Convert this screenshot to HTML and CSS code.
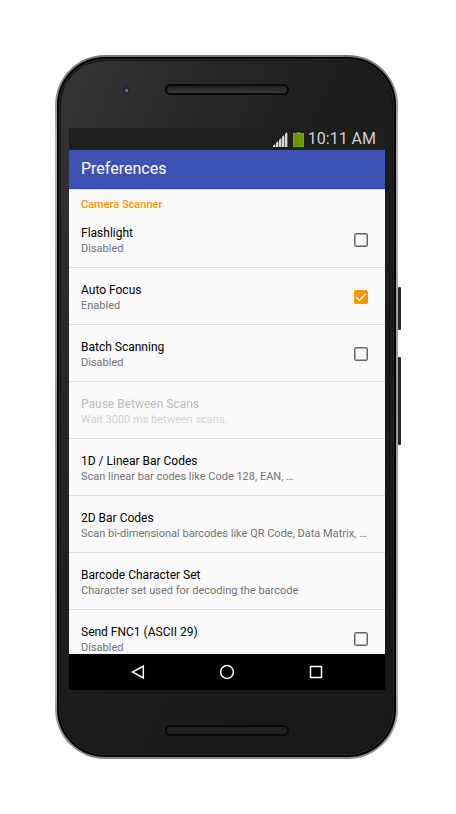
FILE: index.html
```html
<!DOCTYPE html>
<html lang="en">
<head>
<meta charset="utf-8">
<meta name="viewport" content="width=device-width, initial-scale=1">
<title>Preferences</title>
<link rel="stylesheet" href="styles.css">
</head>
<body>
<div class="phone">
  <span class="side-button power"></span>
  <span class="side-button volume"></span>
  <div class="face">
    <div class="forehead">
      <span class="camera"></span>
      <span class="speaker"></span>
    </div>
    <main class="screen">
      <div class="status">
        <svg class="signal" viewBox="0 0 15 15" aria-hidden="true">
          <path d="M0 15L15 1v14z" fill="#6a6a6a"/>
          <path d="M0 15v-1l2-2v3zM3 15v-4l2-2v6zM6 15V8l2-2v9zM9 15V5l2-2v12zM12 15V2l2-2v15z" fill="#d8d8d8"/>
        </svg>
        <svg class="battery" viewBox="0 0 11 15" aria-hidden="true">
          <path d="M4 0h3v1h4v14H0V1h4z" fill="#669900"/>
          <path d="M.5 1.500h10v13H.5z" fill="none" stroke="#7fb010" stroke-dasharray="2 1"/>
        </svg>
        <time>10:11 AM</time>
      </div>
      <header class="app-bar"><h1>Preferences</h1></header>
      <section class="list">
        <h2>Camera Scanner</h2>
        <label class="row"><span class="text"><span class="title">Flashlight</span><span class="summary">Disabled</span></span><span class="box"><input type="checkbox"></span></label>
        <label class="row"><span class="text"><span class="title">Auto Focus</span><span class="summary">Enabled</span></span><span class="box"><input type="checkbox" checked><svg viewBox="0 0 14 14" aria-hidden="true"><path d="M2.300 7.200l3.200 3.200 6.300-6.600"/></svg></span></label>
        <label class="row"><span class="text"><span class="title">Batch Scanning</span><span class="summary">Disabled</span></span><span class="box"><input type="checkbox"></span></label>
        <button class="row" type="button" disabled><span class="text"><span class="title">Pause Between Scans</span><span class="summary">Wait 3000 ms between scans.</span></span></button>
        <button class="row" type="button"><span class="text"><span class="title">1D / Linear Bar Codes</span><span class="summary">Scan linear bar codes like Code 128, EAN, …</span></span></button>
        <button class="row" type="button"><span class="text"><span class="title">2D Bar Codes</span><span class="summary">Scan bi-dimensional barcodes like QR Code, Data Matrix, …</span></span></button>
        <button class="row" type="button"><span class="text"><span class="title">Barcode Character Set</span><span class="summary">Character set used for decoding the barcode</span></span></button>
        <label class="row"><span class="text"><span class="title">Send FNC1 (ASCII 29)</span><span class="summary">Disabled</span></span><span class="box"><input type="checkbox"></span></label>
      </section>
      <nav class="nav">
        <button type="button" aria-label="Back"><svg viewBox="0 0 16 16"><path d="M13.300 2v12L2.500 8z"/></svg></button>
        <button type="button" aria-label="Home"><svg viewBox="0 0 16 16"><circle cx="8" cy="8" r="6.400"/></svg></button>
        <button type="button" aria-label="Recent apps"><svg viewBox="0 0 16 16"><rect x="2.500" y="2.500" width="11" height="11" rx=".5"/></svg></button>
      </nav>
    </main>
    <div class="chin"><span class="speaker low"></span></div>
  </div>
</div>
</body>
</html>
```
FILE: styles.css
```css
* { box-sizing: border-box; }

body {
  margin: 0;
  padding: 55px 58px 55px 55px;
  background: #fff;
  font-family: Roboto, "Liberation Sans", sans-serif;
}

h1, h2 { margin: 0; font-weight: 500; }

button {
  margin: 0;
  padding: 0;
  border: 0;
  background: none;
  font: inherit;
  text-align: left;
}

.phone {
  position: relative;
  height: calc(100vh - 110px);
  min-height: 400px;
  padding: 2px;
  border-radius: 50px;
  background: linear-gradient(#777, #b0b0b0 12%, #999 50%, #aaa 90%, #888);
}

.side-button {
  position: absolute;
  right: -3px;
  width: 3px;
  border-radius: 1px;
  background: #2c2828;
}

.power { top: 232px; height: 43px; }
.volume { top: 302px; height: 88px; }

.face {
  display: flex;
  flex-direction: column;
  height: 100%;
  padding: 0 10px;
  border: 2px solid #050505;
  border-radius: 48px;
  background: linear-gradient(115deg, #363636, #1c1c1c 45%, #191919);
  box-shadow: inset 0 0 0 1px #2c2c2c, inset 0 0 0 2px #141414;
}

.forehead {
  display: grid;
  grid-template-columns: 1fr auto 1fr;
  flex: none;
  height: 69px;
  padding-top: 25px;
}

.camera {
  width: 11px;
  height: 11px;
  margin-left: 51px;
  border-radius: 50%;
  background: radial-gradient(circle at 60% 60%, #806870 0 1px, #2a2438 2px 4px, #302e32 5px);
}

.speaker {
  grid-column: 2;
  width: 124px;
  height: 11px;
  border: 2px solid #090909;
  border-radius: 6px;
  background: linear-gradient(#202020, #3a3a3a);
}

.screen {
  display: flex;
  flex: 1;
  flex-direction: column;
  min-height: 0;
  margin-right: -1px;
}

.status {
  display: flex;
  flex: none;
  align-items: center;
  justify-content: flex-end;
  height: 22px;
  padding-right: 9px;
  background: #1e1e1e;
  color: #cfcfcf;
  font-size: 16px;
  line-height: 22px;
}

.signal { width: 15px; height: 15px; margin-right: 5px; }
.battery { width: 11px; height: 15px; margin-right: 4px; }

.app-bar {
  flex: none;
  height: 39px;
  padding-left: 12px;
  border-bottom: 1px solid #2c3eb2;
  background: #3f51b5;
  color: #fff;
}

.app-bar h1 { font-size: 16px; font-weight: 400; line-height: 38px; }

.list {
  flex: 1;
  min-height: 0;
  overflow: hidden;
  border-top: 1px solid #e4e4dc;
  background: #fafafa;
}

.list h2 {
  padding: 9px 12px 0;
  color: #ff9100;
  font-size: 11px;
  line-height: 12px;
}

.row {
  display: flex;
  align-items: center;
  justify-content: space-between;
  width: 100%;
  padding: 14px 17px 10px 12px;
  border-bottom: 1px solid #dedede;
  color: #1c1c1c;
}

.text { min-width: 0; white-space: nowrap; }
.title, .summary { display: block; line-height: 16px; }
.title { color: #000; font-size: 12px; }
.summary { color: #727272; font-size: 11px; }
.row:disabled .title { color: #bdbdbd; }
.row:disabled .summary { color: #d2d2d2; }

.box {
  display: grid;
  flex: none;
  width: 14px;
  height: 14px;
  margin-bottom: 3px;
}

.box input,
.box svg { grid-area: 1 / 1; width: 14px; height: 14px; }

.box input {
  margin: 0;
  border: 1px solid #666;
  border-radius: 2px;
  background: #fafafa;
  box-shadow: inset 0 0 0 1px #aaa;
  appearance: none;
}

.box input:checked {
  border-color: #ff9100;
  background: #ff9100;
  box-shadow: none;
}

.box svg {
  z-index: 1;
  fill: none;
  stroke: #fff;
  stroke-width: 1.600;
  pointer-events: none;
}

.nav {
  display: flex;
  flex: none;
  align-items: center;
  justify-content: center;
  gap: 73px;
  height: 36px;
  background: #000;
}

.nav svg {
  display: block;
  width: 16px;
  height: 16px;
  fill: none;
  stroke: #fff;
  stroke-width: 1.500;
}

.chin {
  display: flex;
  flex: none;
  justify-content: center;
  height: 65px;
  padding-top: 35px;
}

.low { background: #202020; }
```
